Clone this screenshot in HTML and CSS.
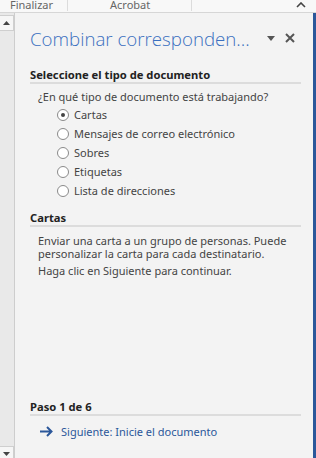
FILE: index.html
```html
<!DOCTYPE html>
<html lang="es">
  <head>
    <meta charset="utf-8" />
    <link rel="stylesheet" href="styles.css">
    <title>Combinar correspondencia</title>
  </head>
  <body>
    <div class="ribbon">
      <span class="tab tab-first">Finalizar</span>
      <span class="tab tab-wide">Acrobat</span>
      <span class="tab-fill"></span>
      <svg class="collapse" width="10" height="6" viewBox="0 0 10 6">
        <path d="M1 5 L5 1 L9 5" fill="none" stroke="#444" stroke-width="1.6" />
      </svg>
    </div>
    <div class="main">
      <div class="scroll">
        <div class="scroll-btn">
          <svg width="7" height="4" viewBox="0 0 7 4"><path d="M0 4 L3.5 0 L7 4 Z" fill="#444" /></svg>
        </div>
        <div class="scroll-track"></div>
        <div class="scroll-btn scroll-btn-down">
          <svg width="7" height="4" viewBox="0 0 7 4"><path d="M0 0 L3.5 4 L7 0 Z" fill="#444" /></svg>
        </div>
      </div>
      <div id="pane">
        <div class="pane-head">
          <h1>Combinar corresponden...</h1>
          <svg class="menu-arrow" width="8" height="5" viewBox="0 0 8 5"><path d="M0 0 L8 0 L4 5 Z" fill="#555" /></svg>
          <svg class="close" width="10" height="10" viewBox="0 0 10 10">
            <path d="M1 1 L9 9 M9 1 L1 9" stroke="#555" stroke-width="2" />
          </svg>
        </div>

        <div class="section">
          <h2>Seleccione el tipo de documento</h2>
          <p class="question">¿En qué tipo de documento está trabajando?</p>
          <ul class="options">
            <li><span class="radio checked"></span>Cartas</li>
            <li><span class="radio"></span>Mensajes de correo electrónico</li>
            <li><span class="radio"></span>Sobres</li>
            <li><span class="radio"></span>Etiquetas</li>
            <li><span class="radio"></span>Lista de direcciones</li>
          </ul>
        </div>

        <div class="section">
          <h2>Cartas</h2>
          <p class="body">Enviar una carta a un grupo de personas. Puede personalizar la carta para cada destinatario.</p>
          <p class="body">Haga clic en Siguiente para continuar.</p>
        </div>

        <div class="spacer"></div>

        <div class="section footer">
          <h2>Paso 1 de 6</h2>
          <a class="next" href="#">
            <svg width="13" height="11" viewBox="0 0 13 11">
              <path d="M0 5.5 L11 5.5 M7 1 L11.5 5.5 L7 10" fill="none" stroke="#2b579a" stroke-width="2" />
            </svg>
            Siguiente: Inicie el documento
          </a>
        </div>
      </div>
      <div class="edge"></div>
    </div>
  </body>
</html>
```

FILE: styles.css
```css
body {
  margin: 0;
  width: 316px;
  height: 458px;
  overflow: hidden;
  font-family: "Noto Sans", "Open Sans", sans-serif;
  font-size: 11px;
  color: #444;
  background: #f3f3f3;
}

.ribbon {
  display: flex;
  align-items: flex-start;
  height: 12px;
  overflow: hidden;
  background: #f8f8f8;
  border-bottom: 1px solid #d6d6d6;
  color: #666;
  font-size: 11px;
}
.tab {
  flex-shrink: 0;
  height: 12px;
  line-height: 12px;
  margin-top: -1px;
  border-right: 1px solid #dcdcdc;
  box-sizing: border-box;
}
.tab-first {
  width: 68px;
  padding-left: 10px;
}
.tab-wide {
  width: 124px;
  padding-left: 42px;
}
.tab-fill {
  flex: 1;
}
.collapse {
  flex-shrink: 0;
  margin: 2px 10px 0 0;
}

.main {
  display: flex;
  height: 445px;
}

.scroll {
  width: 14px;
  display: flex;
  flex-direction: column;
  background: #e9e9e9;
  border-right: 1px solid #cdcdcd;
}
.scroll-btn {
  height: 14px;
  margin-top: 2px;
  display: flex;
  align-items: center;
  justify-content: center;
  background: #f6f6f6;
  border: 1px solid #cfcfcf;
  border-left: none;
}
.scroll-track {
  flex: 1;
}
.scroll-btn-down {
  margin-top: 0;
  margin-bottom: -4px;
}

#pane {
  flex: 1;
  display: flex;
  flex-direction: column;
  padding: 0 12px 0 15px;
}

.pane-head {
  display: flex;
  align-items: center;
  height: 50px;
  margin-bottom: 5px;
}
.pane-head h1 {
  margin: 0;
  flex: 1;
  font-family: "Open Sans", sans-serif;
  font-weight: 300;
  font-size: 18.7px;
  color: #3a6fc0;
  white-space: nowrap;
}
.menu-arrow {
  margin: 0 10px 0 6px;
}
.close {
  margin-right: 6px;
}

.section h2 {
  margin: 0;
  font-size: 11.2px;
  font-weight: bold;
  color: #222;
  line-height: 14px;
  border-bottom: 2px solid #dcdcdc;
}
.question {
  margin: 4px 0 0 8px;
  line-height: 17px;
}
.options {
  list-style: none;
  margin: 0 0 11px;
  padding: 0 0 0 27px;
}
.options li {
  display: flex;
  align-items: center;
  height: 19px;
}
.radio {
  width: 10px;
  height: 10px;
  margin-right: 5px;
  border: 1px solid #8a8a8a;
  border-radius: 50%;
  background: #fff;
  display: flex;
  align-items: center;
  justify-content: center;
}
.radio.checked::after {
  content: "";
  width: 4px;
  height: 4px;
  border-radius: 50%;
  background: #444;
}

.body {
  margin: 7px 0 0 8px;
  line-height: 13px;
}
.body + .body {
  margin-top: 4px;
}

.spacer {
  flex: 1;
}

.footer {
  margin-bottom: 19px;
}
.next {
  display: flex;
  align-items: center;
  gap: 8px;
  margin: 8px 0 0 10px;
  color: #2b579a;
  text-decoration: none;
}

.edge {
  width: 3px;
  background: #2b579a;
}
```
